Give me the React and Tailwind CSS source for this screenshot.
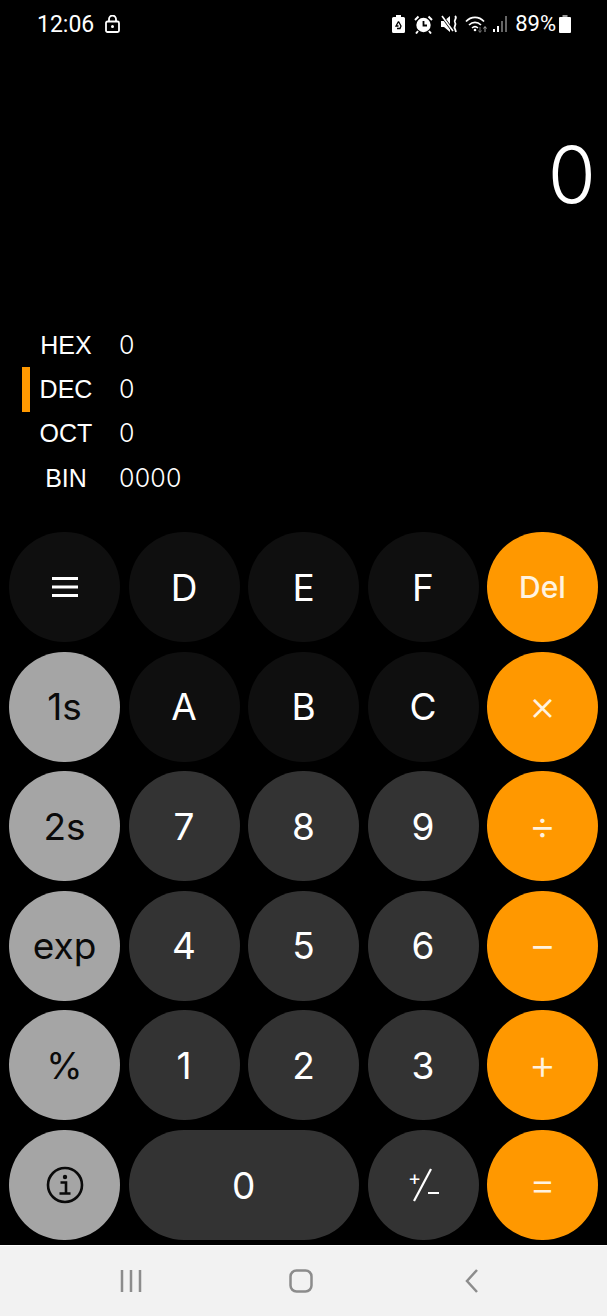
import React from 'react';

const registers = [
  { name: 'HEX', value: '0' },
  { name: 'DEC', value: '0', active: true },
  { name: 'OCT', value: '0' },
  { name: 'BIN', value: '0000' },
];

const dim = 'bg-[#0f0f0f] text-white';
const num = 'bg-[#333333] text-white';
const fn = 'bg-[#a5a5a5] text-[#0a0a0a]';
const op = 'bg-[#ff9800] text-[#fff3e0]';
const opText = 'text-[42px] font-light pb-[3px]';

const MenuIcon = () => (
  <svg width="28" height="22" viewBox="0 0 28 22" fill="none" stroke="#fff" strokeWidth="2.8">
    <path d="M1 2.500h26M1 11h26M1 19.500h26" />
  </svg>
);

const InfoIcon = () => (
  <svg width="38" height="38" viewBox="0 0 38 38" fill="none" stroke="#0a0a0a">
    <circle cx="19" cy="19" r="17" strokeWidth="2.6" />
    <circle cx="19" cy="11" r="2.200" fill="#0a0a0a" stroke="none" />
    <path d="M14.500 16.500H20V27M13.500 27.500h11" strokeWidth="2.600" />
  </svg>
);

const PlusMinus = () => (
  <span className="relative block w-[28px] h-[34px] text-white font-normal">
    <span className="absolute left-[-1px] top-[-2px] text-[20px] leading-[24px]">+</span>
    <svg className="absolute left-0 top-0" width="28" height="34" viewBox="0 0 28 34" stroke="#fff" strokeWidth="2.200">
      <path d="M5 33 22 1" />
    </svg>
    <span className="absolute right-[-2px] top-[24px] w-[11px] h-[2px] bg-white" />
  </span>
);

const keys = [
  { label: <MenuIcon />, tone: dim },
  { label: 'D', tone: dim },
  { label: 'E', tone: dim },
  { label: 'F', tone: dim },
  { label: 'Del', tone: op, text: 'text-[30px] font-medium' },
  { label: '1s', tone: fn },
  { label: 'A', tone: dim },
  { label: 'B', tone: dim },
  { label: 'C', tone: dim },
  { label: '×', tone: op, text: opText },
  { label: '2s', tone: fn },
  { label: '7', tone: num },
  { label: '8', tone: num },
  { label: '9', tone: num },
  { label: '÷', tone: op, text: opText },
  { label: 'exp', tone: fn },
  { label: '4', tone: num },
  { label: '5', tone: num },
  { label: '6', tone: num },
  { label: '−', tone: op, text: opText },
  { label: '%', tone: fn },
  { label: '1', tone: num },
  { label: '2', tone: num },
  { label: '3', tone: num },
  { label: '+', tone: op, text: opText },
  { label: <InfoIcon />, tone: fn },
  { label: '0', tone: num, wide: true },
  { label: <PlusMinus />, tone: num },
  { label: '=', tone: op, text: opText },
];

const StatusIcons = () => (
  <div className="flex items-center">
    {/* battery saver */}
    <svg width="13" height="18" viewBox="0 0 13 18" fill="#fff">
      <path d="M4 0h5v2h2.500A1.500 1.500 0 0 1 13 3.500v13a1.500 1.500 0 0 1-1.500 1.500h-10A1.500 1.500 0 0 1 0 16.500v-13A1.500 1.500 0 0 1 1.500 2H4z" />
      <path d="M6.500 6.500 4 11h2.500M6.500 6.500 9 11l-1 2.500H5" fill="none" stroke="#000" strokeWidth="1.300" />
    </svg>
    {/* alarm */}
    <svg width="19" height="19" viewBox="0 0 19 19" className="ml-[9px]">
      <circle cx="9.500" cy="10" r="7.200" fill="#fff" />
      <path d="M9.500 6v4.500h3.500" fill="none" stroke="#000" strokeWidth="1.800" />
      <path d="M1 5 4.500 1.500M18 5l-3.500-3.500M4 16l-2 2.500M15 16l2 2.500" stroke="#fff" strokeWidth="2" fill="none" />
    </svg>
    {/* muted vibrate */}
    <svg width="18" height="18" viewBox="0 0 18 18" className="ml-[8px]">
      <path d="M0 6h3l6-5v16l-6-5H0z" fill="#fff" />
      <path d="M1 1l11 15" stroke="#000" strokeWidth="3" />
      <path d="M1 1l11 15" stroke="#fff" strokeWidth="1.600" />
      <path d="M14 1c3 2.500-2 4 0 6.500 2 2.500-2 4 0 6.500l1 3" fill="none" stroke="#fff" strokeWidth="1.800" />
    </svg>
    {/* wifi with data arrows */}
    <svg width="23" height="17" viewBox="0 0 23 17" fill="none" stroke="#fff" className="ml-[6px]">
      <path d="M1 5.500c5-5.500 13-5.500 18 0" strokeWidth="1.700" />
      <path d="M4 9c3.500-3.500 8.500-3.500 12 0" strokeWidth="1.600" />
      <path d="M7 12c2-1.800 4-1.800 6 0" strokeWidth="1.500" />
      <circle cx="10" cy="14" r="1.300" fill="#fff" stroke="none" />
      <path d="M15 11v5M13.500 14.500l1.500 2 1.500-2" stroke="#777" strokeWidth="1" />
      <path d="M20 16v-5M18.500 12.500l1.500-2 1.500 2" stroke="#aaa" strokeWidth="1" />
    </svg>
    {/* signal bars */}
    <div className="ml-[5px] flex items-end gap-[2px] h-[16px]">
      <span className="w-[2px] h-[3px] bg-white" />
      <span className="w-[2px] h-[6px] bg-white" />
      <span className="w-[2px] h-[11px] bg-[#666666]" />
      <span className="w-[2px] h-[16px] bg-[#666666]" />
    </div>
    <span className="ml-[8px] text-[22px] leading-none text-white font-['Roboto',sans-serif]">89%</span>
    {/* battery */}
    <svg width="12" height="18" viewBox="0 0 12 18" fill="#fff" className="ml-[3px]">
      <path d="M3.500 0h5v2H3.500z" fill="#999" />
      <rect y="2" width="12" height="16" rx="1" />
    </svg>
  </div>
);

export default function App() {
  return (
    <div className="w-[607px] h-[1316px] flex flex-col bg-black overflow-hidden font-['Inter',sans-serif]">
      <div className="h-[1245px] flex flex-col">
        {/* status bar */}
        <div className="h-[48px] pl-[37px] pr-[36px] flex items-center justify-between">
          <div className="flex items-center">
            <span className="text-[23px] leading-none text-white font-['Roboto',sans-serif]">12:06</span>
            <svg width="15" height="18" viewBox="0 0 15 18" fill="none" stroke="#fff" strokeWidth="1.800" className="ml-[11px]">
              <rect x="1" y="6.500" width="13" height="10.500" rx="1.500" />
              <path d="M4 6.500V4a3.500 3.500 0 0 1 7 0v2.500" />
              <circle cx="7.500" cy="11.500" r="1.500" fill="#fff" stroke="none" />
            </svg>
          </div>
          <StatusIcons />
        </div>

        {/* main readout */}
        <div className="mt-[77px] h-[100px] pr-[11px] flex items-center justify-end text-[78px] leading-none font-light text-white">
          0
        </div>

        {/* register list */}
        <div className="mt-[98px] flex flex-col pl-[22px]">
          {registers.map((r) => (
            <div key={r.name} className="h-[44.300px] flex items-center">
              <span className={`w-[8px] h-[45px] ${r.active ? 'bg-[#ff9800]' : ''}`} />
              <span className="ml-[8px] w-[56px] text-center text-[25px] leading-none text-white font-['Liberation_Sans',sans-serif]">
                {r.name}
              </span>
              <span className="ml-[25px] text-[25px] leading-none font-light tracking-[0.2px] text-white">{r.value}</span>
            </div>
          ))}
        </div>

        {/* keypad */}
        <div className="mt-auto mb-[5px] px-[9px] grid grid-cols-5 auto-rows-[110px] gap-x-[8.500px] gap-y-[9.600px]">
          {keys.map((k, i) => (
            <button
              key={i}
              className={`${k.tone} ${k.wide ? 'col-span-2' : ''} ${k.text || 'text-[37px] font-normal'} rounded-full flex items-center justify-center leading-none`}
            >
              {k.label}
            </button>
          ))}
        </div>
      </div>

      {/* android nav bar */}
      <div className="flex-1 bg-[#f2f2f2] border-t border-white flex items-center">
        <div className="w-full h-[24px] flex items-center justify-between pl-[120px] pr-[128px]">
          <svg width="22" height="22" viewBox="0 0 22 22" stroke="#8c8c8c" strokeWidth="2.500">
            <path d="M2 0v22M11 0v22M20 0v22" />
          </svg>
          <svg width="24" height="24" viewBox="0 0 24 24" fill="none" stroke="#8c8c8c" strokeWidth="2.500" className="mr-[6px]">
            <rect x="1.500" y="1.500" width="21" height="21" rx="6" />
          </svg>
          <svg width="14" height="24" viewBox="0 0 14 24" fill="none" stroke="#8c8c8c" strokeWidth="2.500">
            <path d="M12 1 2 12l10 11" />
          </svg>
        </div>
      </div>
    </div>
  );
}
